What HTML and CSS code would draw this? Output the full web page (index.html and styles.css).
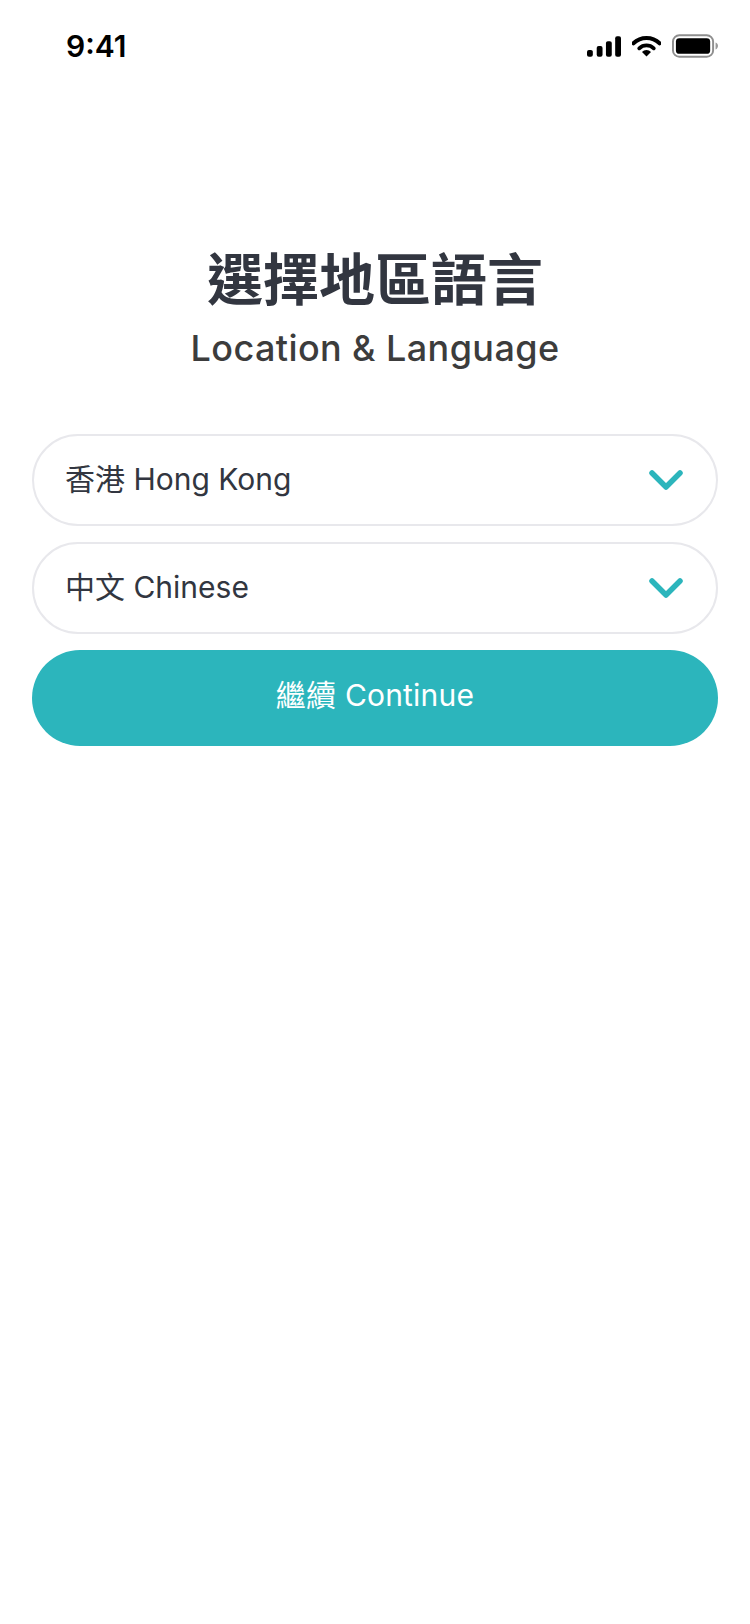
FILE: index.html
```html
<!DOCTYPE html>
<html lang="zh-Hant">
<head>
<meta charset="utf-8">
<title>Location &amp; Language</title>
<link rel="stylesheet" href="styles.css">
</head>
<body>
<div class="status-bar">
  <span class="time">9:41</span>
  <div class="status-icons">
    <svg class="icon-signal" width="34" height="21" viewBox="0 0 35 21"><rect x="0" y="14" width="6" height="7" rx="2"/><rect x="10" y="10" width="6" height="11" rx="2"/><rect x="19.500" y="5" width="6" height="16" rx="2"/><rect x="29" y="0" width="6" height="21" rx="2"/></svg>
    <svg class="icon-wifi" width="29" height="22" viewBox="0 0 32 24"><path d="M1.600 9A20.700 20.700 0 0 1 30.400 9" fill="none" stroke="#000" stroke-width="4.400" stroke-linecap="round"/><path d="M8 14.600a11.600 11.600 0 0 1 16 0" fill="none" stroke="#000" stroke-width="4.200" stroke-linecap="round"/><path d="M11 18.500a7 7 0 0 1 10 0L16 23.500z"/></svg>
    <svg class="icon-battery" width="46" height="24" viewBox="0 0 47 24"><rect x="1" y="1" width="41" height="22" rx="6.500" fill="none" stroke="#8e8e8e" stroke-width="2"/><rect x="4" y="4" width="35" height="16" rx="3.500" fill="#000"/><path d="M44.500 8.500c1.500.5 2.500 2 2.500 3.500s-1 3-2.500 3.500z" fill="#9a9a9a"/></svg>
  </div>
</div>
<main class="content">
  <h1 class="title">選擇地區語言</h1>
  <p class="subtitle">Location &amp; Language</p>
  <form class="form">
    <div class="select"><span class="label">香港 Hong Kong</span><svg class="chevron" width="34" height="22" viewBox="0 0 34 22"><path d="M3 4l14 14L31 4"/></svg></div>
    <div class="select"><span class="label">中文 Chinese</span><svg class="chevron" width="34" height="22" viewBox="0 0 34 22"><path d="M3 4l14 14L31 4"/></svg></div>
    <div class="button"><span class="button-label">繼續 Continue</span></div>
  </form>
</main>
</body>
</html>
```
FILE: styles.css
```css
* { box-sizing: border-box; }
html, body { margin: 0; padding: 0; background: #fff; }
body {
  width: 750px;
  height: 1624px;
  overflow: hidden;
  font-family: Inter, "Noto Sans CJK TC", sans-serif;
}
.status-bar {
  height: 92px;
  padding: 0 32px 0 66px;
  display: flex;
  align-items: center;
  justify-content: space-between;
}
.time { font-size: 30px; font-weight: 600; color: #000; line-height: 1; }
.status-icons { display: flex; align-items: center; gap: 11px; }
.content { padding: 148px 32px 0; }
.title {
  margin: 0;
  font-size: 56px;
  line-height: 80px;
  font-weight: 700;
  color: #323640;
  text-align: center;
}
.subtitle {
  margin: 0;
  font-size: 36px;
  line-height: 57px;
  font-weight: 500;
  letter-spacing: 0.4px;
  color: #3c3c3c;
  text-align: center;
}
.form { margin-top: 57px; display: flex; flex-direction: column; gap: 16px; }
.select {
  height: 92px;
  border: 2px solid #e8e8ec;
  border-radius: 46px;
  padding: 0 33px 0 31px;
  display: flex;
  align-items: center;
  justify-content: space-between;
  font-size: 30px;
  color: #323640;
}
.label { line-height: 40px; padding-bottom: 2px; }
.button-label { line-height: 40px; letter-spacing: 0.2px; padding-bottom: 6px; }
.chevron { fill: none; stroke: #2cb5bc; stroke-width: 5.500; stroke-linecap: round; stroke-linejoin: round; }
.button {
  height: 96px;
  border-radius: 48px;
  background: #2cb5bc;
  color: #fff;
  font-size: 30px;
  display: flex;
  align-items: center;
  justify-content: center;
}
```
